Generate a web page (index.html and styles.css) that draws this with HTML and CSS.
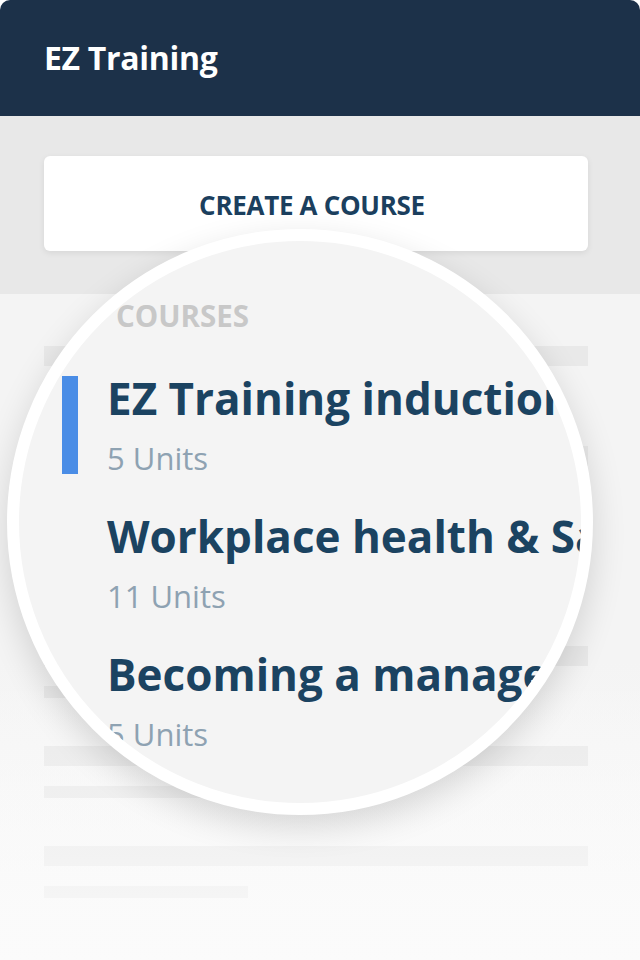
FILE: index.html
```html
<!DOCTYPE html>
<html lang="en">
<head>
<meta charset="utf-8">
<title>EZ Training</title>
<link rel="stylesheet" href="styles.css">
</head>
<body>
<div class="app">
  <header class="topbar">
    <h1 class="brand">EZ Training</h1>
  </header>

  <section class="actions">
    <button class="create-btn" type="button">CREATE A COURSE</button>
  </section>

  <section class="list">
    <div class="sk-item"><div class="sk-title"></div><div class="sk-sub"></div></div>
    <div class="sk-item"><div class="sk-title"></div><div class="sk-sub"></div></div>
    <div class="sk-item"><div class="sk-title"></div><div class="sk-sub"></div></div>
    <div class="sk-item"><div class="sk-title"></div><div class="sk-sub"></div></div>
    <div class="sk-item"><div class="sk-title"></div><div class="sk-sub"></div></div>
    <div class="sk-item"><div class="sk-title"></div><div class="sk-sub"></div></div>
  </section>

  <div class="lens">
    <div class="lens-inner">
      <div class="lens-label">COURSES</div>
      <div class="course is-active">
        <span class="course-marker"></span>
        <div class="course-text">
          <div class="course-title">EZ Training induction</div>
          <div class="course-units">5 Units</div>
        </div>
      </div>
      <div class="course">
        <span class="course-marker"></span>
        <div class="course-text">
          <div class="course-title">Workplace health &amp; Safety</div>
          <div class="course-units">11 Units</div>
        </div>
      </div>
      <div class="course">
        <span class="course-marker"></span>
        <div class="course-text">
          <div class="course-title">Becoming a manager</div>
          <div class="course-units">5 Units</div>
        </div>
      </div>
    </div>
  </div>
</div>
</body>
</html>
```

FILE: styles.css
```css
* { box-sizing: border-box; }

html, body {
  margin: 0;
  padding: 0;
  background: #ffffff;
}

body {
  font-family: "Open Sans", "Noto Sans", sans-serif;
}

.app {
  position: relative;
  width: 640px;
  height: 960px;
  overflow: hidden;
  display: flex;
  flex-direction: column;
}

.topbar {
  height: 116px;
  background: #1c3149;
  border-radius: 10px 10px 0 0;
  display: flex;
  align-items: center;
  padding: 0 44px;
  flex: none;
}

.brand {
  margin: 0;
  color: #ffffff;
  font-size: 32px;
  font-weight: 700;
  letter-spacing: -0.3px;
  line-height: 40px;
}

.actions {
  background: #e8e8e8;
  padding: 40px 52px 43px 44px;
  flex: none;
}

.create-btn {
  display: block;
  width: 100%;
  height: 95px;
  border: 0;
  border-radius: 6px;
  background: #ffffff;
  box-shadow: 0 2px 6px rgba(0, 0, 0, 0.08);
  font-family: "Open Sans", "Noto Sans", sans-serif;
  font-size: 26px;
  font-weight: 700;
  color: #1b3f5e;
  letter-spacing: -0.3px;
  padding: 3px 8px 0 0;
}

.list {
  position: relative;
  flex: 1;
  background: linear-gradient(#f4f4f4 0%, #f4f4f4 55%, #fbfbfb 100%);
  padding: 52px 52px 0 44px;
}

.list::after {
  content: "";
  position: absolute;
  left: 0;
  right: 0;
  top: 380px;
  bottom: 0;
  background: linear-gradient(rgba(251, 251, 251, 0), rgba(251, 251, 251, 0.85));
}

.sk-item {
  display: flex;
  flex-direction: column;
  gap: 20px;
  margin-bottom: 48px;
}

.sk-title {
  height: 20px;
  background: #e9e9e9;
}

.sk-sub {
  height: 12px;
  width: 204px;
  background: #e9e9e9;
}

.lens {
  position: absolute;
  left: 7px;
  top: 229px;
  width: 586px;
  height: 586px;
  border-radius: 50%;
  border: 12px solid #ffffff;
  background: #f4f4f4;
  box-shadow: 0 12px 34px rgba(0, 0, 0, 0.14);
  overflow: hidden;
}

.lens-inner {
  padding: 56px 0 0 43px;
  white-space: nowrap;
}

.lens-label {
  padding-left: 54px;
  font-size: 29.5px;
  font-weight: 700;
  line-height: 38px;
  color: #c8c8c8;
  margin-bottom: 37px;
}

.course {
  display: flex;
  gap: 29px;
  margin-bottom: 32px;
}

.course-marker {
  flex: none;
  width: 16px;
  margin: 4px 0;
}

.course.is-active .course-marker {
  background: #4a8de6;
}

.course-title {
  font-size: 44px;
  font-weight: 700;
  line-height: 52px;
  color: #1b4361;
  margin-bottom: 14px;
}

.course-units {
  font-size: 31px;
  font-weight: 400;
  line-height: 40px;
  color: #8ea2b2;
}
```
